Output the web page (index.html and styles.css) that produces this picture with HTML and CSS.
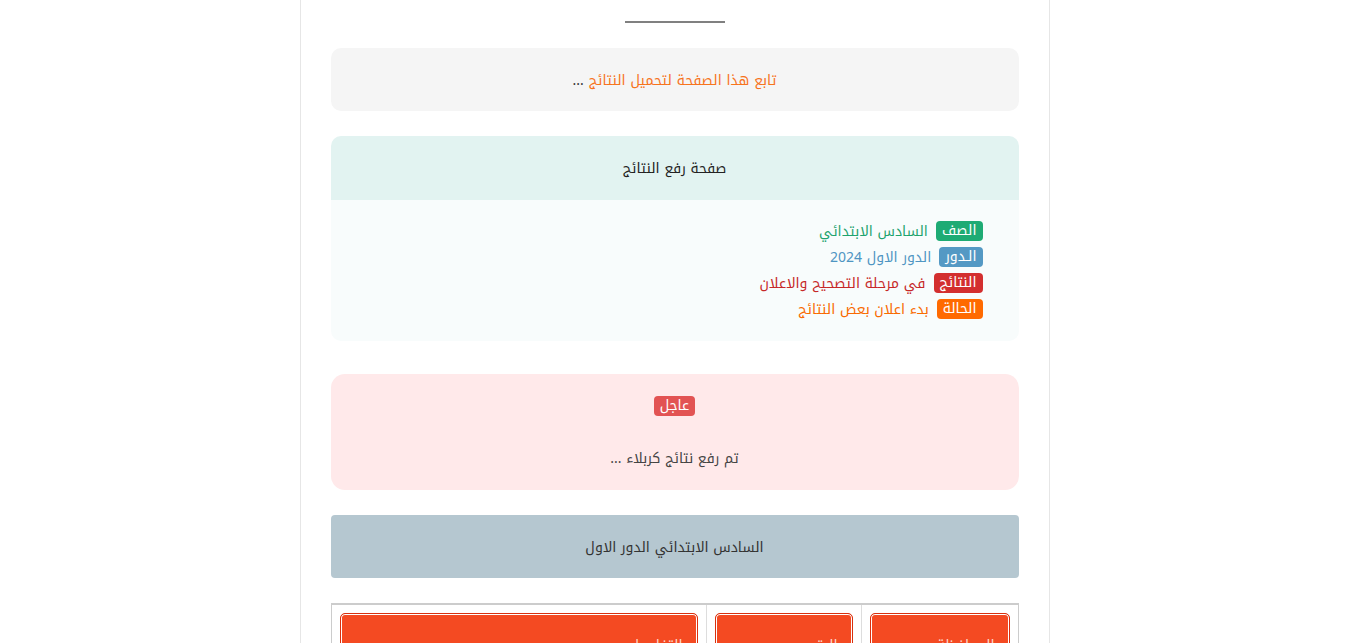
FILE: index.html
```html
<!DOCTYPE html>
<html lang="ar" dir="rtl">
<head>
<meta charset="utf-8">
<title>صفحة رفع النتائج</title>
<link rel="stylesheet" href="styles.css">
</head>
<body>
<div class="page">
  <div class="rule"></div>
  <div class="notice"><span class="notice-text">تابع هذا الصفحة لتحميل النتائج</span> <span class="dots">...</span></div>

  <div class="info">
    <div class="info-head">صفحة رفع النتائج</div>
    <div class="info-body">
      <div class="row"><span class="badge b-green">الصف</span><span class="val c-green">السادس الابتدائي</span></div>
      <div class="row"><span class="badge b-blue">الـدور</span><span class="val c-blue">الدور الاول 2024</span></div>
      <div class="row"><span class="badge b-red">النتائج</span><span class="val c-red">في مرحلة التصحيح والاعلان</span></div>
      <div class="row"><span class="badge b-orange">الحالة</span><span class="val c-orange">بدء اعلان بعض النتائج</span></div>
    </div>
  </div>

  <div class="urgent">
    <div class="urgent-tag"><span class="badge b-urgent">عاجل</span></div>
    <p class="urgent-text">تم رفع نتائج كربلاء ...</p>
  </div>

  <div class="title-bar">السادس الابتدائي الدور الاول</div>

  <table class="grid">
    <tr>
      <td class="c1"><a class="btn">المحافظة</a></td>
      <td class="c2"><a class="btn">الرقم</a></td>
      <td class="c3"><a class="btn">التفاصيل</a></td>
    </tr>
  </table>
</div>
</body>
</html>
```
FILE: styles.css
```css
html, body {
  margin: 0;
  padding: 0;
  background: #fff;
}
body {
  font-family: "Noto Kufi Arabic", "Liberation Sans", "DejaVu Sans", sans-serif;
  font-size: 14px;
  line-height: 20px;
  color: #333;
  overflow: hidden;
}
.page {
  width: 750px;
  box-sizing: border-box;
  margin: 0 auto;
  border-left: 1px solid #e6e6e6;
  border-right: 1px solid #e6e6e6;
  padding: 21px 30px 40px;
  min-height: 700px;
}
.rule {
  width: 100px;
  height: 2px;
  background: #808080;
  margin: 0 auto 25px;
}
.notice {
  background: #f5f5f5;
  border-radius: 10px;
  height: 63px;
  box-sizing: border-box;
  padding-top: 2px;
  display: flex;
  align-items: center;
  justify-content: center;
  gap: 5px;
  margin-bottom: 25px;
}
.notice-text { color: #f7731c; }
.dots { color: #333; }

.info {
  border-radius: 10px;
  overflow: hidden;
  margin-bottom: 33px;
}
.info-head {
  background: #e2f3f1;
  height: 64px;
  box-sizing: border-box;
  padding-top: 2px;
  display: flex;
  align-items: center;
  justify-content: center;
  color: #222;
}
.info-body {
  background: #f8fcfc;
  padding: 19px 36px 18px;
}
.row {
  height: 26px;
  display: flex;
  align-items: center;
  gap: 8px;
}
.badge {
  display: inline-block;
  color: #fff;
  border-radius: 4px;
  padding: 0 6px;
  height: 20px;
  line-height: 20px;
}
.row .badge { margin-top: -2px; }
.b-green { background: #1eab74; }
.b-blue { background: #5499c4; }
.b-red { background: #d32f2f; }
.b-orange { background: #ff6a00; }
.c-green { color: #1ea36e; }
.c-blue { color: #4f95c2; }
.c-red { color: #c62828; }
.c-orange { color: #f96a00; }

.urgent {
  background: #ffe9ea;
  border-radius: 14px;
  padding: 22px 20px 22px;
  text-align: center;
  margin-bottom: 25px;
}
.urgent-tag {
  display: flex;
  justify-content: center;
  height: 20px;
}
.b-urgent {
  background: #e25353;
}
.urgent-text {
  margin: 33px 0 0;
  height: 19px;
  color: #444;
  line-height: 20px;
}

.title-bar {
  background: #b5c7d0;
  border-radius: 4px;
  height: 63px;
  box-sizing: border-box;
  padding-top: 2px;
  display: flex;
  align-items: center;
  justify-content: center;
  color: #333;
  margin-bottom: 25px;
}

.grid {
  width: 100%;
  border-collapse: collapse;
  border-top: 2px solid #ccc;
  border-left: 1px solid #ccc;
  border-right: 1px solid #ccc;
}
.grid td {
  border-left: 1px solid #ddd;
  padding: 8px;
  vertical-align: top;
}
.grid td:last-child { border-left: none; }
.c1 { width: 140px; }
.c2 { width: 138px; }
.btn {
  display: block;
  background: #f44a22;
  border: 1px solid #d9300f;
  box-shadow: inset 0 0 0 1px #fff;
  border-radius: 5px;
  color: #ffd9cc;
  text-align: right;
  padding: 22px 14px 12px;
  line-height: 20px;
}
```
